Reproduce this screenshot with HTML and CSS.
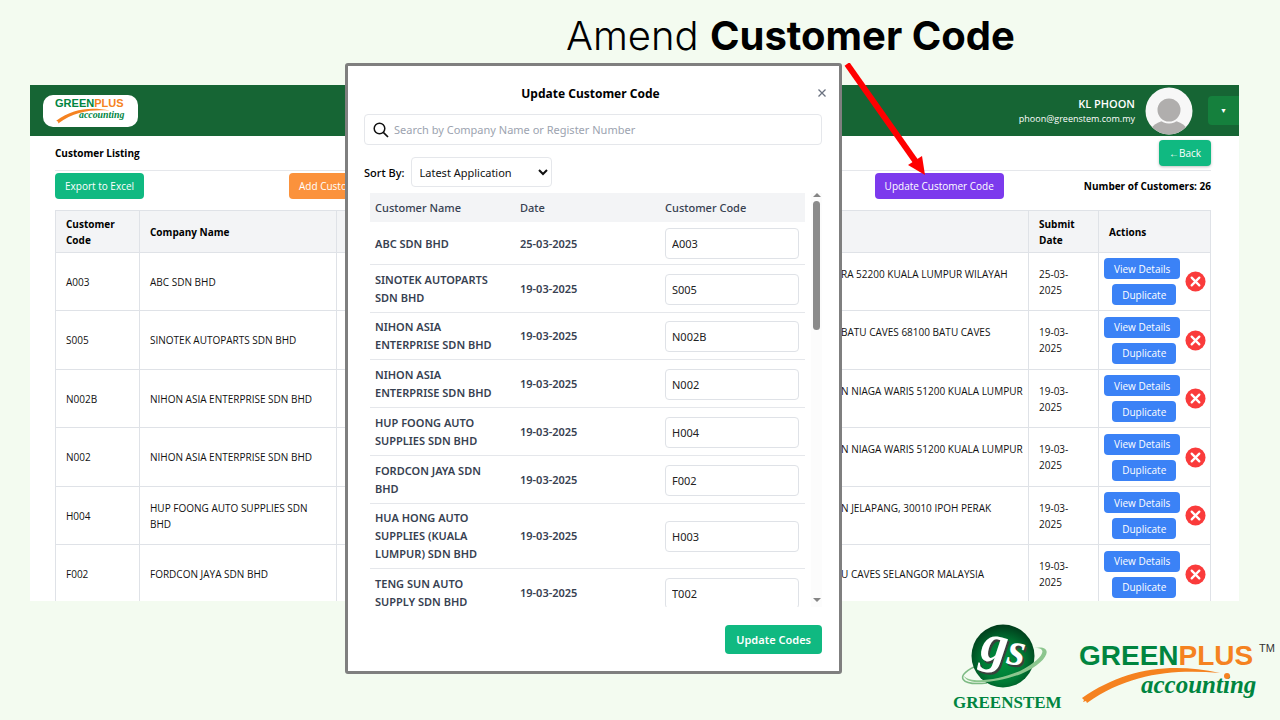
FILE: index.html
```html
<!DOCTYPE html>
<html lang="en">
<head>
    <meta charset="UTF-8">
    <meta name="viewport" content="width=device-width, initial-scale=1.0">
    <title>Amend Customer Code</title>
    <link rel="stylesheet" href="styles.css">
</head>
<body>
    <h1 class="slide-title">Amend <b>Customer Code</b></h1>

    <main class="app">
        <header class="topbar">
            <a class="brand" href="#" aria-label="Greenplus accounting">
                <svg viewBox="0 0 180 66">
                    <text x="0" y="23" class="logo-sans" fill="#00853f">GREEN<tspan fill="#f58220">PLUS</tspan></text>
                    <path d="M3 58 C45 27 90 22 139 32 C95 29 50 33 8 65 L8 60 Z" fill="#f58220"/>
                    <text x="61" y="52" class="logo-serif" fill="#00853f">accounting</text>
                </svg>
            </a>
            <div class="user">
                <strong>KL PHOON</strong>
                <span>phoon@greenstem.com.my</span>
            </div>
            <svg class="avatar" viewBox="0 0 48 48">
                <defs><clipPath id="round"><circle cx="24" cy="24" r="23.5"/></clipPath></defs>
                <circle cx="24" cy="24" r="23.5" fill="#f7f7f7"/>
                <g clip-path="url(#round)" fill="#b0aead">
                    <ellipse cx="24" cy="48" rx="20" ry="15"/>
                    <circle cx="24" cy="23" r="12.5" stroke="#f7f7f7" stroke-width="2"/>
                </g>
            </svg>
            <button class="menu-btn" aria-label="Account menu">▼</button>
        </header>

        <section class="listing">
            <div class="listing-head">
                <h2>Customer Listing</h2>
                <button class="btn green back">←Back</button>
            </div>
            <div class="toolbar">
                <button class="btn green">Export to Excel</button>
                <button class="btn orange">Add Customer</button>
                <button class="btn purple">Update Customer Code</button>
                <b>Number of Customers: 26</b>
            </div>
            <table class="customers">
                <colgroup>
                    <col class="c-code"><col class="c-name"><col><col class="c-address"><col class="c-date"><col class="c-actions">
                </colgroup>
                <thead>
                    <tr><th>Customer Code</th><th>Company Name</th><th></th><th></th><th>Submit Date</th><th>Actions</th></tr>
                </thead>
                <tbody>
                    <tr>
                        <td>A003</td><td>ABC SDN BHD</td><td></td><td>RA 52200 KUALA LUMPUR WILAYAH<br>&nbsp;</td><td>25-03-2025</td>
                        <td class="actions"><div><span><button>View Details</button><button>Duplicate</button></span><button class="del" aria-label="Delete"><svg viewBox="0 0 22 22"><circle cx="11" cy="11" r="10.5"/><path d="M7 7 15 15 M15 7 7 15"/></svg></button></div></td>
                    </tr>
                    <tr>
                        <td>S005</td><td>SINOTEK AUTOPARTS SDN BHD</td><td></td><td>BATU CAVES 68100 BATU CAVES<br>&nbsp;</td><td>19-03-2025</td>
                        <td class="actions"><div><span><button>View Details</button><button>Duplicate</button></span><button class="del" aria-label="Delete"><svg viewBox="0 0 22 22"><circle cx="11" cy="11" r="10.5"/><path d="M7 7 15 15 M15 7 7 15"/></svg></button></div></td>
                    </tr>
                    <tr>
                        <td>N002B</td><td>NIHON ASIA ENTERPRISE SDN BHD</td><td></td><td>N NIAGA WARIS 51200 KUALA LUMPUR<br>&nbsp;</td><td>19-03-2025</td>
                        <td class="actions"><div><span><button>View Details</button><button>Duplicate</button></span><button class="del" aria-label="Delete"><svg viewBox="0 0 22 22"><circle cx="11" cy="11" r="10.5"/><path d="M7 7 15 15 M15 7 7 15"/></svg></button></div></td>
                    </tr>
                    <tr>
                        <td>N002</td><td>NIHON ASIA ENTERPRISE SDN BHD</td><td></td><td>N NIAGA WARIS 51200 KUALA LUMPUR<br>&nbsp;</td><td>19-03-2025</td>
                        <td class="actions"><div><span><button>View Details</button><button>Duplicate</button></span><button class="del" aria-label="Delete"><svg viewBox="0 0 22 22"><circle cx="11" cy="11" r="10.5"/><path d="M7 7 15 15 M15 7 7 15"/></svg></button></div></td>
                    </tr>
                    <tr>
                        <td>H004</td><td>HUP FOONG AUTO SUPPLIES SDN BHD</td><td></td><td>N JELAPANG, 30010 IPOH PERAK<br>&nbsp;</td><td>19-03-2025</td>
                        <td class="actions"><div><span><button>View Details</button><button>Duplicate</button></span><button class="del" aria-label="Delete"><svg viewBox="0 0 22 22"><circle cx="11" cy="11" r="10.5"/><path d="M7 7 15 15 M15 7 7 15"/></svg></button></div></td>
                    </tr>
                    <tr>
                        <td>F002</td><td>FORDCON JAYA SDN BHD</td><td></td><td>U CAVES SELANGOR MALAYSIA</td><td>19-03-2025</td>
                        <td class="actions"><div><span><button>View Details</button><button>Duplicate</button></span><button class="del" aria-label="Delete"><svg viewBox="0 0 22 22"><circle cx="11" cy="11" r="10.5"/><path d="M7 7 15 15 M15 7 7 15"/></svg></button></div></td>
                    </tr>
                </tbody>
            </table>
        </section>
    </main>

    <footer class="logos">
        <svg class="greenstem" viewBox="0 0 112 92" role="img" aria-label="Greenstem">
            <defs>
                <radialGradient id="ball" cx="0.5" cy="0.6" r="0.58">
                    <stop offset="0" stop-color="#00913f"/>
                    <stop offset="0.55" stop-color="#007a35"/>
                    <stop offset="1" stop-color="#003f1c"/>
                </radialGradient>
            </defs>
            <path d="M22 45 C3 54 8 64 35 61" fill="none" stroke="#7dba84" stroke-width="1.5"/>
            <circle cx="51" cy="34" r="31.5" fill="url(#ball)"/>
            <g transform="rotate(8 51 34)">
                <text x="30" y="43" class="logo-gs" fill="#3a403c">g<tspan class="logo-s">s</tspan></text>
                <text x="28" y="41" class="logo-gs" fill="#fff">g<tspan class="logo-s">s</tspan></text>
            </g>
            <path d="M82 26 C104 22 96 41 69 52 C45 61 15 64 12 54 C19 62 47 58 68 49 C90 38 98 25 82 26 Z" fill="#8cc68e"/>
            <text x="1" y="86" class="logo-caps" fill="#00853f">GREENSTEM</text>
        </svg>
        <svg class="greenplus" viewBox="0 0 180 66" role="img" aria-label="Greenplus accounting">
            <text x="0" y="23" class="logo-sans" fill="#00853f">GREEN<tspan fill="#f58220">PLUS</tspan></text>
            <path d="M3 56 C45 27 90 20 141 31 C95 27 50 31 8 61 L7 59 L4 60 L5 58 Z" fill="#f58220"/>
            <text x="62" y="51" class="logo-serif" fill="#00853f">accounting</text>
            <circle cx="148" cy="34" r="3" fill="#f58220"/>
        </svg>
        <span class="tm">TM</span>
    </footer>

    <div class="modal" role="dialog" aria-labelledby="modalTitle">
        <div class="modal-head">
            <h2 id="modalTitle">Update Customer Code</h2>
            <button class="close" aria-label="Close">
                <svg viewBox="0 0 10 10"><path d="M1.5 1.5 8.5 8.5 M8.5 1.5 1.5 8.5" stroke="#6b7280" stroke-width="1.3"/></svg>
            </button>
        </div>
        <label class="search">
            <svg viewBox="0 0 16 16"><circle cx="6.5" cy="6.5" r="5.3" fill="none" stroke="#111" stroke-width="1.5"/><path d="M10.3 10.3 15 15" stroke="#111" stroke-width="1.7"/></svg>
            <input type="text" placeholder="Search by Company Name or Register Number" aria-label="Search">
        </label>
        <div class="sort">
            <label for="sortBy">Sort By:</label>
            <select id="sortBy"><option>Latest Application</option></select>
        </div>
        <div class="scroll">
            <table class="codes">
                <thead>
                    <tr><th>Customer Name</th><th>Date</th><th>Customer Code</th></tr>
                </thead>
                <tbody>
                    <tr><td>ABC SDN BHD</td><td>25-03-2025</td><td><input value="A003" aria-label="Code for ABC"></td></tr>
                    <tr><td>SINOTEK AUTOPARTS SDN BHD</td><td>19-03-2025</td><td><input value="S005" aria-label="Code for SINOTEK"></td></tr>
                    <tr><td>NIHON ASIA ENTERPRISE SDN BHD</td><td>19-03-2025</td><td><input value="N002B" aria-label="Code for NIHON ASIA (B)"></td></tr>
                    <tr><td>NIHON ASIA ENTERPRISE SDN BHD</td><td>19-03-2025</td><td><input value="N002" aria-label="Code for NIHON ASIA"></td></tr>
                    <tr><td>HUP FOONG AUTO SUPPLIES SDN BHD</td><td>19-03-2025</td><td><input value="H004" aria-label="Code for HUP FOONG"></td></tr>
                    <tr><td>FORDCON JAYA SDN BHD</td><td>19-03-2025</td><td><input value="F002" aria-label="Code for FORDCON"></td></tr>
                    <tr><td>HUA HONG AUTO SUPPLIES (KUALA LUMPUR) SDN BHD</td><td>19-03-2025</td><td><input value="H003" aria-label="Code for HUA HONG"></td></tr>
                    <tr><td>TENG SUN AUTO SUPPLY SDN BHD</td><td>19-03-2025</td><td><input value="T002" aria-label="Code for TENG SUN"></td></tr>
                </tbody>
            </table>
            <div class="scrollbar">
                <i class="up"></i>
                <i class="thumb"></i>
                <i class="down"></i>
            </div>
        </div>
        <button class="btn green save">Update Codes</button>
    </div>

    <svg class="arrow" viewBox="0 0 90 115" aria-hidden="true">
        <path d="M5 1 74 99" stroke="#f00" stroke-width="6"/>
        <path d="M83 112 66 102 80 93 Z" fill="#f00"/>
    </svg>
</body>
</html>
```
FILE: styles.css
```css
* {
    margin: 0;
    padding: 0;
    box-sizing: border-box;
}
body {
    display: grid;
    grid-template-rows: 85px 1fr 119px;
    height: 100vh;
    background: #f3fbf0;
    color: #000;
    font-family: 'Open Sans', 'Noto Sans', sans-serif;
    font-size: 10px;
    overflow: hidden;
    position: relative;
}
button, input, select {
    font: inherit;
}
button {
    border: none;
    cursor: pointer;
}
.slide-title {
    padding: 12px 0 0 566px;
    font-family: 'Inter', sans-serif;
    font-size: 40px;
    line-height: 48px;
    font-weight: 300;
    white-space: nowrap;
}
.slide-title b {
    font-weight: 700;
}

/* customer listing page */
.app {
    margin: 0 41px 0 30px;
    background: #fff;
    overflow: hidden;
}
.topbar {
    display: flex;
    align-items: center;
    height: 51px;
    padding-left: 13px;
    background: #166534;
    color: #fff;
}
.brand {
    display: flex;
    align-items: center;
    justify-content: center;
    width: 95px;
    height: 32px;
    margin-right: auto;
    background: #fff;
    border-radius: 10px;
}
.brand svg {
    width: 71px;
    height: 26px;
}
.user {
    display: flex;
    flex-direction: column;
    text-align: right;
    font-size: 9px;
    line-height: 15px;
}
.user strong {
    font-size: 11px;
    font-weight: 600;
}
.avatar {
    width: 48px;
    height: 48px;
    margin: 0 15px 0 10px;
}
.menu-btn {
    width: 31px;
    height: 29px;
    background: #15803d;
    border-radius: 4px 0 0 4px;
    color: #fff;
    font-size: 7px;
}
.listing {
    padding: 0 28px 0 25px;
}
.listing-head {
    display: flex;
    align-items: center;
    justify-content: space-between;
    height: 35px;
    border-bottom: 1px solid #e5e7eb;
}
.listing-head h2 {
    font-size: 10px;
}
.btn {
    height: 26px;
    padding: 0 10px;
    border-radius: 4px;
    color: #fff;
    white-space: nowrap;
}
.green {
    background: #10b981;
}
.orange {
    background: #fb923c;
}
.purple {
    background: #7c3aed;
}
.back {
    box-shadow: 0 1px 3px rgba(0, 0, 0, 0.25);
}
.toolbar {
    display: grid;
    grid-template-columns: 154px 1fr auto auto;
    gap: 80px;
    align-items: center;
    justify-items: start;
    padding: 2px 0 11px;
}
.customers {
    width: 100%;
    table-layout: fixed;
    border-collapse: collapse;
    line-height: 16px;
}
.c-code {
    width: 84px;
}
.c-name {
    width: 197px;
}
.c-address {
    width: 198px;
}
.c-date {
    width: 70px;
}
.c-actions {
    width: 112px;
}
.customers th, .customers td {
    padding: 0 10px;
    border: 1px solid #dfe2e7;
    text-align: left;
}
.customers td {
    color: #111;
}
.customers td:nth-child(4) {
    white-space: nowrap;
}
.customers th {
    height: 42px;
    background: #f3f4f6;
}
.customers tbody tr {
    height: 58px;
}
.customers tbody tr:nth-child(even) {
    height: 59px;
}
.customers .actions {
    padding: 0 5px;
}
.actions div {
    display: flex;
    align-items: center;
    gap: 5px;
}
.actions span {
    display: flex;
    flex-direction: column;
    align-items: flex-end;
    gap: 5px;
}
.actions span button {
    height: 21px;
    padding: 0 10px;
    background: #3b82f6;
    border-radius: 4px;
    color: #fff;
    white-space: nowrap;
}
.actions span button:last-child {
    margin-right: 4px;
}
.actions .del {
    width: 21px;
    height: 21px;
    background: none;
}
.del svg {
    display: block;
    width: 21px;
    height: 21px;
    fill: #fa3b3b;
}
.del path {
    stroke: #fff;
    stroke-width: 2.4;
    stroke-linecap: round;
}

/* update dialog */
.modal {
    position: absolute;
    top: 63px;
    left: 345px;
    display: flex;
    flex-direction: column;
    width: 497px;
    height: 611px;
    padding: 15px 17px 17px 16px;
    background: #fff;
    border: 3px solid #7f7f7f;
    border-radius: 3px;
    font-family: 'Noto Sans', sans-serif;
    font-size: 11px;
}
.modal-head {
    display: flex;
    align-items: center;
    height: 24px;
    margin: 0 -5px 9px 0;
}
.modal-head h2 {
    flex: 1;
    font-size: 12px;
    text-align: center;
}
.close {
    width: 10px;
    height: 20px;
    background: none;
}
.close svg {
    display: block;
    width: 10px;
    height: 10px;
}
.search {
    display: flex;
    align-items: center;
    gap: 5px;
    height: 31px;
    padding: 0 8px;
    border: 1px solid #e5e7eb;
    border-radius: 4px;
}
.search svg {
    width: 16px;
    height: 16px;
}
.search input {
    flex: 1;
    border: none;
    outline: none;
}
.search input::placeholder {
    color: #9ca3af;
}
.sort {
    display: flex;
    align-items: center;
    gap: 6px;
    margin: 12px 0 6px;
    font-weight: 500;
}
.sort select {
    width: 141px;
    height: 30px;
    padding: 0 4px;
    background: #fff;
    border: 1px solid #e5e7eb;
    border-radius: 4px;
    color: #111;
    font-weight: 400;
}
.scroll {
    display: flex;
    justify-content: space-between;
    align-items: flex-start;
    flex: 1;
    min-height: 0;
    padding-left: 6px;
    overflow: hidden;
}
.codes {
    width: 435px;
    table-layout: fixed;
    border-collapse: collapse;
    color: #374151;
    font-weight: 500;
    line-height: 18px;
}
.codes th {
    height: 29px;
    padding: 0 5px;
    background: #f3f4f6;
    text-align: left;
    font-weight: 500;
}
.codes td {
    padding: 6px 5px 5px;
    border-bottom: 1px solid #e5e7eb;
    font-weight: 600;
}
.codes tr:nth-child(4n+3) td {
    padding-top: 5px;
}
.codes td:first-child {
    padding-right: 16px;
}
.codes input {
    display: block;
    width: 134px;
    height: 31px;
    padding: 0 6px;
    border: 1px solid #dfe2e7;
    border-radius: 4px;
    color: #222;
    font-weight: 400;
}
.scrollbar {
    display: flex;
    flex-direction: column;
    align-items: center;
    align-self: stretch;
    width: 11px;
    padding-bottom: 5px;
    background: #fcfcfc;
}
.up, .down {
    border: 4px solid transparent;
    border-top-width: 0;
    border-bottom: 4px solid #858585;
}
.down {
    margin-top: auto;
    border-bottom-width: 0;
    border-top: 4px solid #858585;
}
.thumb {
    width: 7px;
    height: 129px;
    margin-top: 4px;
    background: #8b8b8b;
    border-radius: 4px;
}
.save {
    align-self: flex-end;
    height: 29px;
    margin-top: 18px;
    padding: 0 11px;
    font-weight: 600;
}
.arrow {
    position: absolute;
    top: 63px;
    left: 842px;
    width: 90px;
    height: 115px;
}

/* logos */
.logos {
    display: flex;
    justify-content: flex-end;
    padding: 21px 5px 0 0;
}
.greenstem {
    width: 112px;
    height: 92px;
    margin-right: 15px;
}
.greenplus {
    width: 180px;
    height: 66px;
    margin-top: 20px;
}
.tm {
    margin-top: 20px;
    font-family: 'Liberation Sans', sans-serif;
    font-size: 11px;
    color: #333;
}
.logo-sans {
    font: bold 28px 'Liberation Sans', sans-serif;
}
.logo-serif {
    font: italic bold 25px 'Liberation Serif', serif;
}
.logo-gs {
    font: italic bold 54px 'Liberation Serif', serif;
}
.logo-s {
    font-size: 46px;
}
.logo-caps {
    font: bold 17px 'Liberation Serif', serif;
}
```
